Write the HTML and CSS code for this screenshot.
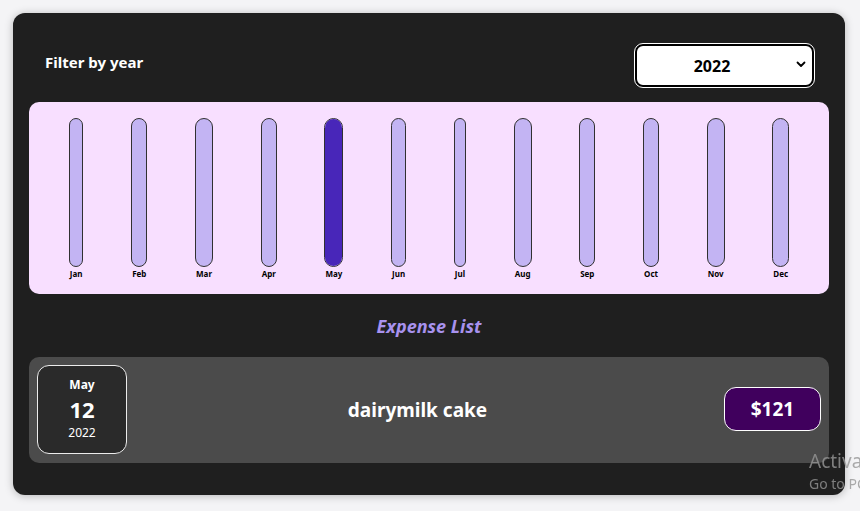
FILE: index.html
```html
<!DOCTYPE html>
<html lang="en">
<head>
<meta charset="utf-8">
<title>Expenses</title>
<link rel="stylesheet" href="styles.css">
</head>
<body>
<div class="expenses">
  <div class="filter">
    <label class="filter-label">Filter by year</label>
    <div class="select">
      <span class="select-value">2022</span>
      <svg class="select-arrow" width="10" height="7" viewBox="0 0 10 7"><path d="M1.5 1.5 L5 5 L8.5 1.5" fill="none" stroke="#000" stroke-width="1.8" stroke-linecap="round" stroke-linejoin="round"/></svg>
    </div>
  </div>

  <div class="chart">
    <div class="bar"><div class="bar-inner"></div><div class="bar-label">Jan</div></div>
    <div class="bar"><div class="bar-inner"></div><div class="bar-label">Feb</div></div>
    <div class="bar"><div class="bar-inner"></div><div class="bar-label">Mar</div></div>
    <div class="bar"><div class="bar-inner"></div><div class="bar-label">Apr</div></div>
    <div class="bar"><div class="bar-inner"><div class="bar-fill" style="height:100%"></div></div><div class="bar-label">May</div></div>
    <div class="bar"><div class="bar-inner"></div><div class="bar-label">Jun</div></div>
    <div class="bar"><div class="bar-inner"></div><div class="bar-label">Jul</div></div>
    <div class="bar"><div class="bar-inner"></div><div class="bar-label">Aug</div></div>
    <div class="bar"><div class="bar-inner"></div><div class="bar-label">Sep</div></div>
    <div class="bar"><div class="bar-inner"></div><div class="bar-label">Oct</div></div>
    <div class="bar"><div class="bar-inner"></div><div class="bar-label">Nov</div></div>
    <div class="bar"><div class="bar-inner"></div><div class="bar-label">Dec</div></div>
  </div>

  <h2 class="list-title">Expense List</h2>

  <div class="item">
    <div class="date">
      <div class="date-month">May</div>
      <div class="date-day">12</div>
      <div class="date-year">2022</div>
    </div>
    <div class="item-desc">
      <h2 class="item-title">dairymilk cake</h2>
    </div>
    <div class="price">$121</div>
  </div>
</div>

<div class="watermark">
  <div class="wm-1">Activate Windows</div>
  <div class="wm-2">Go to PC settings to activate Windows.</div>
</div>
</body>
</html>
```

FILE: styles.css
```css
* { box-sizing: border-box; }

html, body {
  margin: 0;
  padding: 0;
  background: #f4f4f6;
  font-family: "Noto Sans", "Open Sans", sans-serif;
  overflow: hidden;
}

body {
  padding: 13px 15px 16px 13px;
}

.expenses {
  width: 832px;
  height: 482px;
  background: #1f1f1f;
  border-radius: 12px;
  padding: 31px 16px 16px 16px;
  box-shadow: 0 1px 8px rgba(0, 0, 0, 0.25);
}

.filter {
  display: flex;
  justify-content: space-between;
  align-items: flex-start;
  padding: 0 15px 0 16px;
  height: 58px;
}

.filter-label {
  color: #fff;
  font-weight: 700;
  font-size: 15px;
  margin-top: 8px;
}

.select {
  position: relative;
  width: 179px;
  height: 43px;
  background: #fff;
  border: 2px solid #000;
  border-radius: 8px;
  outline: 1px solid #fff;
  display: flex;
  align-items: center;
  justify-content: center;
}

.select-value {
  font-weight: 700;
  font-size: 16px;
  color: #000;
  margin-right: 25px;
}

.select-arrow {
  position: absolute;
  right: 6px;
  top: 15px;
}

.chart {
  height: 192px;
  padding: 16px 16px 14px;
  background: #f8dfff;
  border-radius: 10px;
  display: flex;
  justify-content: space-around;
}

.bar {
  display: flex;
  flex-direction: column;
  align-items: stretch;
  height: 100%;
}

.bar-inner {
  flex: 1;
  border: 1px solid #313131;
  border-radius: 12px;
  background: #c3b4f3;
  overflow: hidden;
  display: flex;
  flex-direction: column;
  justify-content: flex-end;
}

.bar-fill {
  background: #4826b9;
  width: 100%;
}

.bar-label {
  font-weight: 700;
  font-size: 8px;
  color: #000;
  text-align: center;
  padding: 0 1px;
  line-height: 13px;
}

.list-title {
  margin: 20px 0 0;
  height: 43px;
  text-align: center;
  font-style: italic;
  font-weight: 700;
  font-size: 18px;
  color: #a892ee;
}

.item {
  display: flex;
  align-items: center;
  height: 106px;
  background: #4b4b4b;
  border-radius: 10px;
  padding: 8px;
}

.date {
  width: 90px;
  height: 89px;
  background: #2a2a2a;
  border: 1px solid #ececec;
  border-radius: 12px;
  color: #fff;
  display: flex;
  flex-direction: column;
  align-items: center;
  justify-content: center;
  gap: 2px;
  margin-top: -2px;
}

.date-month {
  font-weight: 700;
  font-size: 12px;
  line-height: 16px;
}

.date-day {
  font-weight: 700;
  font-size: 22px;
  line-height: 28px;
}

.date-year {
  font-size: 12px;
  line-height: 16px;
}

.item-desc {
  flex: 1;
  display: flex;
  justify-content: center;
  padding-right: 16px;
}

.item-title {
  margin: 0;
  color: #fff;
  font-size: 19px;
  font-weight: 700;
}

.price {
  width: 97px;
  height: 44px;
  background: #40005d;
  border: 1px solid #fff;
  border-radius: 12px;
  color: #fff;
  font-weight: 700;
  font-size: 19px;
  display: flex;
  align-items: center;
  justify-content: center;
  margin-top: -2px;
}

.watermark {
  position: fixed;
  left: 809px;
  top: 448px;
  white-space: nowrap;
  color: rgba(150, 150, 150, 0.8);
}

.wm-1 {
  font-size: 19px;
  line-height: 26px;
}

.wm-2 {
  font-size: 14px;
  line-height: 20px;
}
```
